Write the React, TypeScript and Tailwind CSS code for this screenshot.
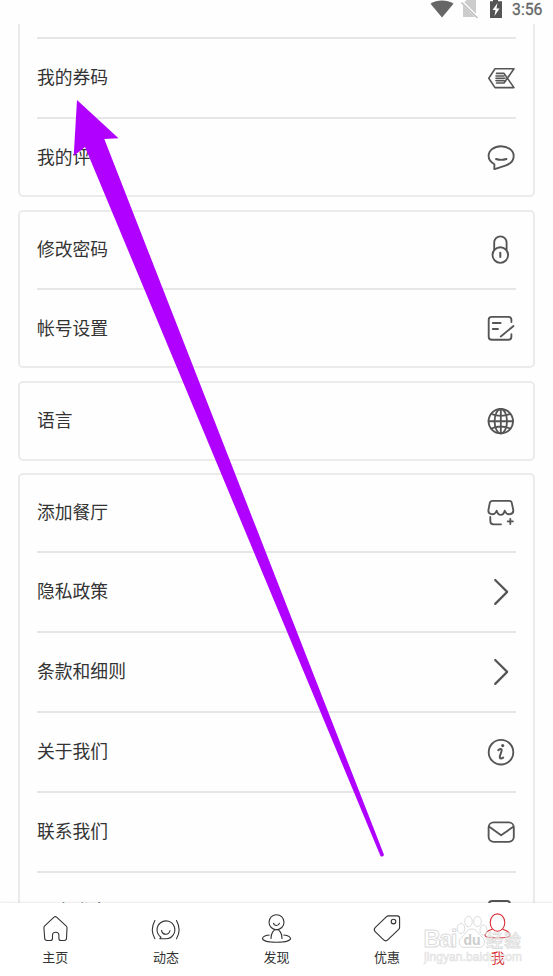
import type { ReactNode } from "react";

const icons: Record<string, ReactNode> = {
  coupon: (
    <>
      <path d="M28 5.800H9L2.800 15.200 9 24.600h19L18 10.400h-7.500M28 5.800 18 20h-7.500M10 13h8M10 15.300h9M10 17.600h8" strokeWidth="1.600" />
    </>
  ),
  review: (
    <>
      <path d="M8.400 22.200C4.800 20.200 2.600 17.500 2.600 14 2.600 8.500 8 4.200 15 4.200s12.700 4.300 12.700 9.800c0 4.600-3.400 7.800-7.700 9.300-3.500 1.200-7.300 2.300-11.700 3.800z" />
      <path d="M10 17q5 1.700 10.500 0" />
    </>
  ),
  lock: (
    <>
      <path d="M8.200 15V7.500a6.200 6.200 0 0 1 12.400 0V15" />
      <circle cx="14.300" cy="20" r="7.800" />
      <path d="M14.300 17.800v4.200" strokeWidth="2" />
    </>
  ),
  edit: (
    <path d="M25.400 9V6.800q0-3-3-3H5.700q-3 0-3 3v16.900q0 3 3 3h16.700q3 0 3-3v-2.500M14.800 23.500 27.500 13M6.800 10h7.800M6.800 16H12" />
  ),
  globe: (
    <>
      <circle cx="14.800" cy="15.200" r="12.200" />
      <ellipse cx="14.800" cy="15.200" rx="6.200" ry="12.200" />
      <path d="M14.800 3v24.400M2.600 15.200H27M5.300 7.900q9.500 4 19 0M5.300 22.500q9.500-4 19 0" />
    </>
  ),
  shop: (
    <>
      <path d="M6.500 2.900h16.700q2.300 0 2.600 2l1.500 7.200c.4 4.700-6.600 6-8.600.6-1 4.200-2.600 4.200-4 4.200s-3-.8-4-4.200c-2 5.400-8.800 4.100-8.300-.6L3.800 4.900q.5-2 2.700-2z" />
      <path d="M4.300 19v4q0 3.300 3.300 3.300h7.400M24.300 20.800V26M21.700 23.400h5.200" />
    </>
  ),
  arrow: <path d="m9.200 3 12 11.900-12 12" strokeWidth="2.200" />,
  info: (
    <>
      <circle cx="15" cy="15.200" r="12.300" />
      <circle cx="16.700" cy="8.600" r="1.600" fill="#555" stroke="none" />
      <path d="M12.200 13.200q2.400-1.800 3.400-.8c.8.8-2 6-1.800 8 .1 1.500 1.600 1.200 3.400.2" strokeWidth="2" />
    </>
  ),
  mail: (
    <>
      <rect x="2.600" y="5.400" width="25.200" height="19.400" rx="5" />
      <path d="m3.300 9.800 11.800 8.400L27.300 9.800" />
    </>
  ),
  logout: <rect x="3" y="4" width="21" height="21" rx="3" strokeWidth="2" />,
};

type RowProps = { label: string; icon: string; edge?: boolean; last?: boolean };

const Row = ({ label, icon, edge, last }: RowProps) => (
  <div className={edge ? "flex h-[76px] shrink-0 items-center justify-between" : "flex h-[78px] shrink-0 items-center justify-between"}>
    <span className={last ? "relative -top-px text-[17.8px] leading-6 text-[#333]" : "relative -top-[2px] text-[17.8px] leading-6 text-[#333]"}>{label}</span>
    <svg width="30" height="30" viewBox="0 0 30 30" fill="none" stroke="#555" strokeWidth="1.850" strokeLinecap="round" strokeLinejoin="round">
      {icons[icon]}
    </svg>
  </div>
);

const Line = () => <div className="h-[2px] shrink-0 bg-[#e6e6e6]" />;

const tabs = [
  {
    label: "主页",
    icon: <path d="M4.500 14.200 14 5.200q1.300-1.300 2.600 0l9.700 9q.7.600.7 1.600l-.5 10.500q-.1 2.200-2.200 2.200h-3.400q-2 0-2-2v-3.200q0-3-3.200-3t-3.200 3v3.200q0 2-2 2H7q-2.200 0-2.300-2.200l-.8-10.500q0-1 .6-1.600z" />,
  },
  {
    label: "动态",
    icon: (
      <>
        <path d="M11 25.200a8.900 8.900 0 1 1 4.800 1.500H9.900z" />
        <path d="M11.500 18.500c1.200 5 7.400 5 8.500 0M4.900 8.500q-5.200 9.500 0 18.200M26.500 8.500q5.200 9.500 0 18.200" />
      </>
    ),
  },
  {
    label: "发现",
    icon: (
      <>
        <circle cx="15.500" cy="10.200" r="7.500" />
        <path d="M12.500 11.200c.8 3.100 5.100 3.100 6 0M10 26.500c0-5 2.300-9 5.500-9s5.500 4 5.500 9M8.200 23C4.300 23.500 1.500 25 1.500 26.600c0 2 5.500 3.700 14 3.700s14-1.700 14-3.700c0-1.600-2.800-3.100-6.700-3.600" />
      </>
    ),
  },
  {
    label: "优惠",
    icon: (
      <>
        <path d="M14.300 4.800q1-.9 2.300-.9h8.700q2.300 0 2.300 2.300v9q0 1.300-.9 2.200L16 27.700q-2.300 2.200-4.600 0l-8-7.800q-2.300-2.300 0-4.600z" />
        <circle cx="21.500" cy="9.600" r="2.300" />
      </>
    ),
  },
  {
    label: "我",
    icon: (
      <>
        <ellipse cx="10.500" cy="10.600" rx="7.300" ry="8.700" />
        <path d="M5.200 17.300C.8 18.700-2 21-2 23.500c0 2 4 2.500 12.500 2.500S23 25.500 23 23.500c0-2.500-2.800-4.800-7.200-6.200" />
      </>
    ),
    active: true,
  },
];

const StatusBar = () => (
  <div className="flex h-6 shrink-0 items-start justify-end pr-[10px] text-[#666]">
    <svg width="82" height="20" viewBox="431 0 82 20">
      <path d="M431.500 3.800C438-.5 448-.5 454.500 3.800L443 17.500z" fill="#666" />
      <path d="M467.500 0h9.500v17h-13V3.500z" fill="#ccc" />
      <path d="m462 1 17 17" stroke="#fff" strokeWidth="3" />
      <path d="m462.500 2.500 16 15.500" stroke="#bbb" strokeWidth="1.400" />
      <path d="M491 1.300h3V0h5v1.300h4V18h-12z" fill="#555" />
      <path d="m498.500 3-5 7h3l-1 6 5-7.500h-3z" fill="#fff" />
    </svg>
    <span className="w-[31px] font-[Roboto] text-[15.800px] leading-[19px] whitespace-nowrap [-webkit-text-stroke:0.300px_#666]">3:56</span>
  </div>
);

const Watermark = () => (
  <svg className="absolute right-[20px] bottom-[10px]" width="115" height="54" viewBox="418 912 115 54" fill="#fff" fillOpacity="0.600" stroke="#ccc" strokeOpacity="0.700" strokeWidth="1">
    <ellipse cx="461" cy="928.500" rx="3.800" ry="5" />
    <ellipse cx="468.500" cy="921.500" rx="3.800" ry="5.200" />
    <ellipse cx="477.500" cy="921.500" rx="3.800" ry="5.200" />
    <ellipse cx="483.500" cy="930" rx="3.500" ry="5" />
    <path d="M471.500 929c6 0 6.500 5 10.500 8 5 4 2 11-4 10.500q-6.500-1-13 0c-6 .5-8-7-3-10.500 4-3 4.500-8 9.500-8z" />
    <text x="423.500" y="947" className="font-['Liberation_Sans'] text-[24px] font-bold" textLength="34">Bai</text>
    <text x="463.500" y="945" className="font-['Liberation_Sans'] text-[14px] font-bold" fill="#ccc" fillOpacity="1" stroke="none">du</text>
    <text x="486" y="946.500" className="text-[17px] font-medium" textLength="35" strokeWidth="0.800">经验</text>
    <text x="424" y="960.500" className="font-['Liberation_Sans'] text-[12px]" textLength="98" strokeWidth="0.700" strokeOpacity="0.600">jingyan.baidu.com</text>
  </svg>
);

const card = "flex shrink-0 flex-col rounded-[5px] border-2 border-[#ebebeb] pr-[17px] pl-[17px]";

const App = () => {
  return (
    <div className="relative flex h-[976px] w-[553px] flex-col overflow-hidden bg-[#fefefe] font-['Noto_Sans_CJK_SC',sans-serif]">
      <StatusBar />
      <div className="flex min-h-0 flex-1 flex-col overflow-hidden pr-[18px] pl-[18px]">
        <div className="flex shrink-0 flex-col rounded-b-[5px] border-2 border-t-0 border-[#ebebeb] px-[17px] pt-[13px]">
          <Line />
          <Row label="我的券码" icon="coupon" />
          <Line />
          <Row label="我的评论" icon="review" edge last />
        </div>
        <div className={card + " mt-[13px]"}>
          <Row label="修改密码" icon="lock" edge />
          <Line />
          <Row label="帐号设置" icon="edit" edge last />
        </div>
        <div className={card + " mt-[13px]"}>
          <Row label="语言" icon="globe" edge />
        </div>
        <div className={card + " mt-[12px]"}>
          <Row label="添加餐厅" icon="shop" edge />
          <Line />
          <Row label="隐私政策" icon="arrow" />
          <Line />
          <Row label="条款和细则" icon="arrow" />
          <Line />
          <Row label="关于我们" icon="info" />
          <Line />
          <Row label="联系我们" icon="mail" />
          <Line />
          <Row label="用户登出" icon="logout" />
        </div>
      </div>
      <nav className="z-0 grid h-[73px] shrink-0 grid-cols-5 bg-white shadow-[0_-1px_2px_rgba(0,0,0,0.08)]">
        {tabs.map((tab) => (
          <div key={tab.label} className={tab.active ? "flex flex-col items-center pt-[9px] text-[#dc2f36]" : "flex flex-col items-center pt-[9px] text-[#333]"}>
            <svg className="overflow-visible" width="31" height="32" viewBox={tab.active ? "-5 0 31 32" : "0 0 31 32"} fill="none" stroke="currentColor" strokeWidth="1.100" strokeLinejoin="round" strokeLinecap="round">
              {tab.icon}
            </svg>
            <span className={tab.active ? "mt-[3px] text-[14px] leading-5" : "mt-[3px] text-[13px] leading-5"}>{tab.label}</span>
          </div>
        ))}
      </nav>
      <Watermark />
      {/* pointer */}
      <svg className="pointer-events-none absolute top-0 left-0" width="553" height="976" viewBox="0 0 553 976" fill="#b000ff">
        <path d="M77 100 118.500 138.300 104.300 139 383.900 854.500Q383.800 857.500 380.600 856.200L85 147 73.700 156z" />
      </svg>
    </div>
  );
};

export default App;
